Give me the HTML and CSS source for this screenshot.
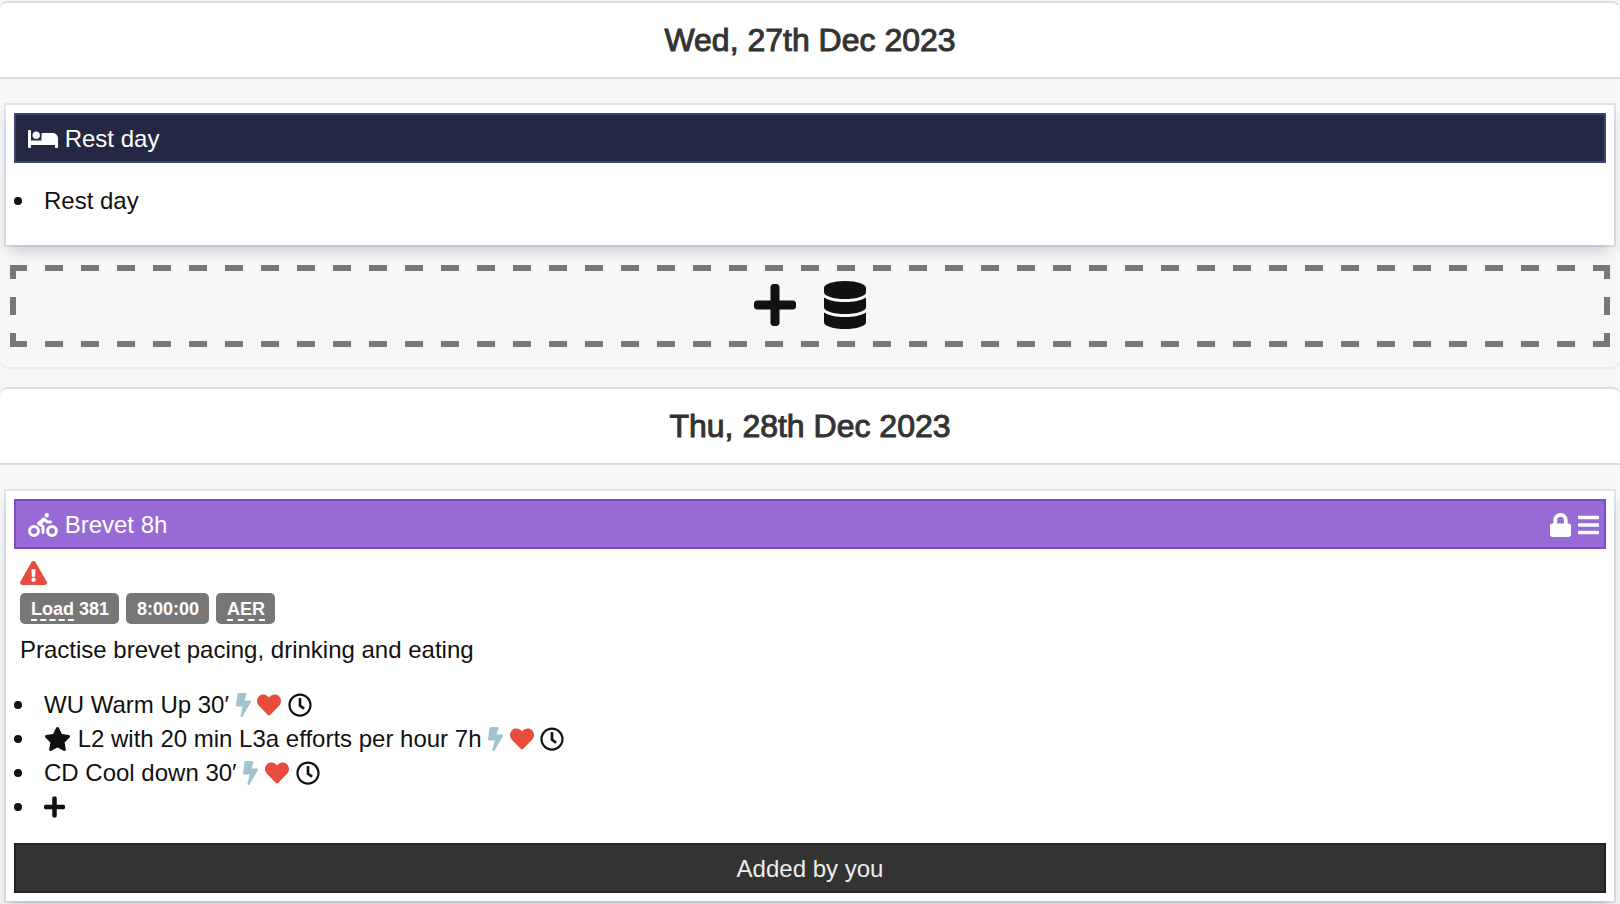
FILE: index.html
```html
<!DOCTYPE html>
<html lang="en">
<head>
    <meta charset="UTF-8">
    <meta name="viewport" content="width=device-width, initial-scale=1.0">
    <title>Training plan</title>
    <link rel="stylesheet" href="styles.css">
</head>
<body>

<!-- Shared icons -->
<svg class="sprite" aria-hidden="true">
    <symbol id="plus" viewBox="0 0 448 512"><path d="M416 208H272V64c0-17.67-14.33-32-32-32h-32c-17.67 0-32 14.33-32 32v144H32c-17.67 0-32 14.33-32 32v32c0 17.67 14.33 32 32 32h144v144c0 17.67 14.33 32 32 32h32c17.67 0 32-14.33 32-32V304h144c17.67 0 32-14.33 32-32v-32c0-17.67-14.33-32-32-32z"/></symbol>
    <symbol id="bolt" viewBox="0 0 320 512"><path d="M296 160H180.6l42.6-129.8C227.2 15 215.7 0 200 0H56C44 0 33.8 8.9 32.2 20.8l-32 240C-1.7 275.2 9.5 288 24 288h118.7L96.6 482.5c-3.6 15.2 8 29.5 23.3 29.5 8.4 0 16.4-4.4 20.8-12l176-304c9.3-15.9-2.2-36-20.7-36z"/></symbol>
    <symbol id="heart" viewBox="0 0 512 512"><path d="M462.3 62.6C407.5 15.9 326 24.3 275.7 76.2L256 96.5l-19.7-20.3C186.1 24.3 104.5 15.9 49.7 62.6c-62.8 53.6-66.1 149.8-9.9 207.9l193.5 199.8c12.5 12.9 32.8 12.9 45.3 0l193.5-199.8c56.3-58.1 53-154.3-9.8-207.9z"/></symbol>
    <symbol id="clock" viewBox="0 0 512 512"><path d="M256 8C119 8 8 119 8 256s111 248 248 248 248-111 248-248S393 8 256 8zm0 448c-110.5 0-200-89.5-200-200S145.5 56 256 56s200 89.5 200 200-89.5 200-200 200zm61.8-104.4l-84.9-61.7c-3.1-2.3-4.9-5.9-4.9-9.7V116c0-6.6 5.4-12 12-12h32c6.6 0 12 5.4 12 12v141.7l66.8 48.6c5.4 3.9 6.5 11.4 2.6 16.8L334.6 349c-3.9 5.3-11.4 6.5-16.8 2.6z"/></symbol>
</svg>

<section class="panel">
    <div class="panel-heading"><h3>Wed, 27th Dec 2023</h3></div>
    <div class="panel-body">
        <article class="card">
            <header class="bar bar-rest">
                <span class="bar-title">
                    <svg class="icon icon-wide" viewBox="0 0 640 512"><path d="M176 256c44.11 0 80-35.89 80-80s-35.89-80-80-80-80 35.89-80 80 35.89 80 80 80zm352-128H304c-8.84 0-16 7.16-16 16v144H64V80c0-8.84-7.16-16-16-16H16C7.16 64 0 71.16 0 80v352c0 8.84 7.16 16 16 16h32c8.84 0 16-7.16 16-16v-48h512v48c0 8.84 7.16 16 16 16h32c8.84 0 16-7.16 16-16V240c0-61.86-50.14-112-112-112z"/></svg>
                    Rest day
                </span>
            </header>
            <ul class="steps">
                <li>Rest day</li>
            </ul>
        </article>
        <div class="add-box">
            <button type="button" aria-label="Add workout"><svg class="icon-lg"><use href="#plus"/></svg></button>
            <button type="button" aria-label="Add from library"><svg class="icon-lg" viewBox="0 0 448 512"><path d="M448 73.143v45.714C448 159.143 347.667 192 224 192S0 159.143 0 118.857V73.143C0 32.857 100.333 0 224 0s224 32.857 224 73.143zM448 176v102.857C448 319.143 347.667 352 224 352S0 319.143 0 278.857V176c48.125 33.143 136.208 48.572 224 48.572S399.874 209.143 448 176zm0 160v102.857C448 479.143 347.667 512 224 512S0 479.143 0 438.857V336c48.125 33.143 136.208 48.572 224 48.572S399.874 369.143 448 336z"/></svg></button>
        </div>
    </div>
</section>

<section class="panel">
    <div class="panel-heading"><h3>Thu, 28th Dec 2023</h3></div>
    <div class="panel-body">
        <article class="card">
            <header class="bar bar-ride">
                <span class="bar-title">
                    <svg class="icon icon-wide" viewBox="0 0 640 512"><path d="M400 96a48 48 0 1 0-48-48 48 48 0 0 0 48 48zm-4 121a31.9 31.9 0 0 0 20 7h64a32 32 0 0 0 0-64h-52.78L356 103a31.94 31.94 0 0 0-40.81.68l-112 96a32 32 0 0 0 3.08 50.92L288 305.12V416a32 32 0 0 0 64 0V288a32 32 0 0 0-14.25-26.62l-41.36-27.57 58.25-49.92zm116 39a128 128 0 1 0 128 128 128 128 0 0 0-128-128zm0 192a64 64 0 1 1 64-64 64 64 0 0 1-64 64zM128 256a128 128 0 1 0 128 128 128 128 0 0 0-128-128zm0 192a64 64 0 1 1 64-64 64 64 0 0 1-64 64z"/></svg>
                    Brevet 8h
                </span>
                <span class="bar-actions">
                    <button type="button" aria-label="Lock"><svg class="icon icon-narrow" viewBox="0 0 448 512"><path d="M400 224h-24v-72C376 68.2 307.8 0 224 0S72 68.2 72 152v72H48c-26.5 0-48 21.5-48 48v192c0 26.5 21.5 48 48 48h352c26.5 0 48-21.5 48-48V272c0-26.5-21.5-48-48-48zm-104 0H152v-72c0-39.7 32.3-72 72-72s72 32.3 72 72v72z"/></svg></button>
                    <button type="button" aria-label="Menu"><svg class="icon icon-narrow" viewBox="0 0 448 512"><path d="M16 132h416c8.837 0 16-7.163 16-16V76c0-8.837-7.163-16-16-16H16C7.163 60 0 67.163 0 76v40c0 8.837 7.163 16 16 16zm0 160h416c8.837 0 16-7.163 16-16v-40c0-8.837-7.163-16-16-16H16c-8.837 0-16 7.163-16 16v40c0 8.837 7.163 16 16 16zm0 160h416c8.837 0 16-7.163 16-16v-40c0-8.837-7.163-16-16-16H16c-8.837 0-16 7.163-16 16v40c0 8.837 7.163 16 16 16z"/></svg></button>
                </span>
            </header>
            <div class="details">
                <div class="warning">
                    <svg class="icon icon-warning" viewBox="0 0 576 512"><path d="M569.517 440.013C587.975 472.007 564.806 512 527.94 512H48.054c-36.937 0-59.999-40.055-41.577-71.987L246.423 23.985c18.467-32.009 64.72-31.951 83.154 0l239.94 416.028zM288 354c-25.405 0-46 20.595-46 46s20.595 46 46 46 46-20.595 46-46-20.595-46-46-46zm-43.673-165.346l7.418 136c.347 6.364 5.609 11.346 11.982 11.346h48.546c6.373 0 11.635-4.982 11.982-11.346l7.418-136c.375-6.874-5.098-12.654-11.982-12.654h-63.383c-6.884 0-12.356 5.78-11.981 12.654z"/></svg>
                </div>
                <div class="labels">
                    <span class="label"><abbr>Load</abbr> 381</span>
                    <span class="label">8:00:00</span>
                    <span class="label"><abbr>AER</abbr></span>
                </div>
                <p>Practise brevet pacing, drinking and eating</p>
            </div>
            <ul class="steps">
                <li>WU Warm Up 30′
                    <svg class="icon icon-bolt"><use href="#bolt"/></svg>
                    <svg class="icon icon-heart"><use href="#heart"/></svg>
                    <svg class="icon"><use href="#clock"/></svg>
                </li>
                <li><svg class="icon icon-star" viewBox="0 0 576 512"><path d="M259.3 17.8L194 150.2 47.9 171.5c-26.2 3.8-36.7 36.1-17.7 54.6l105.7 103-25 145.5c-4.5 26.3 23.2 46 46.4 33.7L288 439.6l130.7 68.7c23.2 12.2 50.9-7.4 46.4-33.7l-25-145.5 105.7-103c19-18.5 8.5-50.8-17.7-54.6L382 150.2 316.7 17.8c-11.7-23.6-45.6-23.9-57.4 0z"/></svg>
                    L2 with 20 min L3a efforts per hour 7h
                    <svg class="icon icon-bolt"><use href="#bolt"/></svg>
                    <svg class="icon icon-heart"><use href="#heart"/></svg>
                    <svg class="icon"><use href="#clock"/></svg>
                </li>
                <li>CD Cool down 30′
                    <svg class="icon icon-bolt"><use href="#bolt"/></svg>
                    <svg class="icon icon-heart"><use href="#heart"/></svg>
                    <svg class="icon"><use href="#clock"/></svg>
                </li>
                <li><button type="button" aria-label="Add step"><svg class="icon icon-narrow"><use href="#plus"/></svg></button></li>
            </ul>
            <footer class="bar bar-note">Added by you</footer>
        </article>
    </div>
</section>

</body>
</html>
```
FILE: styles.css
```css
* {
    box-sizing: border-box;
}
body {
    margin: 0;
    padding-top: 1px;
    background-color: #f6f6f6;
    color: #111;
    font-family: "Helvetica Neue", Helvetica, "Liberation Sans", Arial, sans-serif;
    font-size: 24px;
    line-height: 34px;
    overflow: hidden;
}
button {
    display: inline-block;
    margin: 0;
    padding: 0;
    border: none;
    background: none;
    color: inherit;
    font: inherit;
    cursor: pointer;
}
.sprite {
    display: none;
}

/* Day panels */
.panel {
    margin-bottom: 20px;
    border-radius: 8px;
    background-color: #f7f7f7;
    box-shadow: 0 2px 2px rgba(0, 0, 0, 0.05);
}
.panel-heading {
    padding: 20px;
    border-top: 2px solid #ddd;
    border-bottom: 2px solid #ddd;
    border-radius: 8px 8px 0 0;
    background-color: #fff;
    text-align: center;
}
.panel-heading h3 {
    margin: 0;
    color: #333;
    font-size: 32px;
    font-weight: 500;
    line-height: 34px;
    -webkit-text-stroke: 1px #333;
}
.panel-body {
    padding: 26px 6px 20px;
}
.card {
    padding: 8px;
    background-color: #fff;
    box-shadow: 0 8px 16px -4px rgba(9, 30, 66, 0.25), 0 0 0 2px rgba(9, 30, 66, 0.08);
}

/* Coloured strips */
.bar {
    display: flex;
    justify-content: space-between;
    padding: 7px 5px 5px 12px;
    border: 2px solid;
    color: #fff;
}
.bar-rest {
    background-color: #242843;
    border-color: #3b4474;
}
.bar-ride {
    background-color: #966bd6;
    border-color: #7c4bcb;
}
.bar-note {
    justify-content: center;
    padding: 7px 12px 5px;
    background-color: #333;
    border-color: #222;
    color: #eee;
}
.bar-actions {
    display: flex;
    gap: 7px;
}

/* Icons */
.icon {
    width: 24px;
    height: 24px;
    fill: currentColor;
    vertical-align: -4px;
}
.icon-wide {
    width: 30px;
}
.icon-narrow {
    width: 21px;
}
.icon-bolt {
    width: 15px;
    color: #a0c4ce;
}
.icon-heart {
    color: #e74c3c;
}
.icon-star {
    width: 27px;
}
.icon-warning {
    width: 27px;
    color: #e74c3c;
}
.icon-lg {
    display: block;
    width: 42px;
    height: 48px;
    fill: currentColor;
}

/* Dashed area for adding a workout */
.add-box {
    display: flex;
    justify-content: center;
    align-items: flex-start;
    gap: 28px;
    margin: 20px 4px 0;
    padding: 16px 16px 18px;
    background:
        linear-gradient(90deg, transparent 9px, #777 9px 27px, transparent 27px) center top / 36px 6px repeat-x,
        linear-gradient(90deg, transparent 9px, #777 9px 27px, transparent 27px) center bottom / 36px 6px repeat-x,
        linear-gradient(transparent 9px, #777 9px 27px, transparent 27px) left center / 6px 36px repeat-y,
        linear-gradient(transparent 9px, #777 9px 27px, transparent 27px) right center / 6px 36px repeat-y;
}

/* Workout details */
.details {
    padding: 7px 6px 0;
}
.labels {
    display: flex;
    gap: 7px;
    padding: 3px 0 9px;
}
.label {
    padding: 1px 10px 0 11px;
    border-radius: 5px;
    background-color: #777;
    color: #fff;
    font-size: 18px;
    font-weight: bold;
    line-height: 30px;
}
.label abbr {
    border-bottom: 2px dashed #fff;
}
.details p {
    margin: 0;
}
.steps {
    margin: 21px 0 19px;
    padding: 0;
    list-style: none;
}
.steps li::before {
    content: "";
    display: inline-block;
    width: 8px;
    height: 8px;
    margin-right: 22px;
    border-radius: 50%;
    background-color: #111;
    vertical-align: 4px;
}
```
